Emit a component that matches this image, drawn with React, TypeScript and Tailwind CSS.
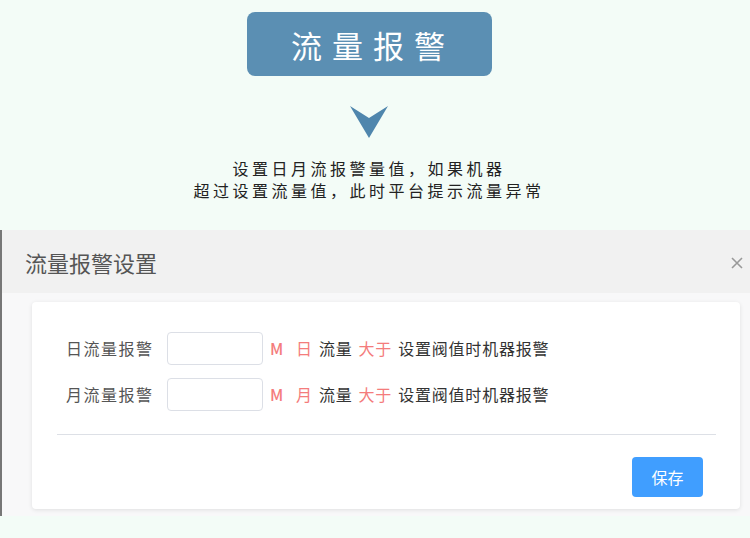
import React from "react";

const font = { fontFamily: '"Noto Sans CJK SC", "Noto Sans", sans-serif' };

function Row({ label, unit }: { label: string; unit: string }) {
  return (
    <div className="flex items-center h-[33px]">
      <div className="w-[101px] text-[16px] tracking-[1.5px] text-[#555] leading-none mb-[2px]">{label}</div>
      <div className="w-[96px] h-[33px] rounded-[4px] border border-[#dcdfe6] bg-white" />
      <div className="flex items-center gap-[6px] ml-[7px] text-[16px] tracking-[0.8px] leading-none mb-[2px]">
        <span className="text-[#f47c7c] font-medium">M</span>
        <span className="text-[#f47c7c] ml-[6px]">{unit}</span>
        <span className="text-[#333]">流量</span>
        <span className="text-[#f47c7c]">大于</span>
        <span className="text-[#333]">设置阀值时机器报警</span>
      </div>
    </div>
  );
}

export default function App() {
  return (
    <div className="w-[750px] h-[538px] bg-[#f3fcf7] overflow-hidden" style={font}>
      <div className="w-[738px] h-[230px] flex flex-col items-center">
        <div className="mt-[12px] w-[245px] h-[64px] rounded-[8px] bg-[#5b8fb3] flex items-center justify-center text-white text-[31px] tracking-[10px] pl-[8px] leading-none">
          流量报警
        </div>
        <svg className="mt-[29px]" width="38" height="33" viewBox="0 0 38 33">
          <path d="M0 1 L19 13 L38 1 L19 33 Z" fill="#4f86ad" />
        </svg>
        <div className="mt-[19px] text-[16px] leading-[22px] tracking-[3.5px] text-[#222] text-center">
          <div>设置日月流报警量值，如果机器</div>
          <div>超过设置流量值，此时平台提示流量异常</div>
        </div>
      </div>
      <div className="h-[286px] border-l-2 border-[#777] bg-[#f8f8f9] flex flex-col">
        <div className="h-[63px] bg-[#f1f1f1] flex items-center justify-between pl-[23px] pr-[6px]">
          <span className="text-[22px] text-[#555] leading-none">流量报警设置</span>
          <svg width="14" height="14" viewBox="0 0 14 14" className="mt-[2px]">
            <path d="M2 2 L12 12 M12 2 L2 12" stroke="#999" strokeWidth="1.6" />
          </svg>
        </div>
        <div className="pt-[9px] pl-[30px] pr-[10px]">
          <div className="h-[207px] bg-white rounded-[4px] shadow-[0_1px_4px_rgba(0,0,0,0.1)] flex flex-col">
            <div className="pt-[30px] pl-[34px] flex flex-col gap-[13px]">
              <Row label="日流量报警" unit="日" />
              <Row label="月流量报警" unit="月" />
            </div>
            <div className="mt-[23px] mx-[24px] ml-[25px] h-px bg-[#dde0e6]" />
            <div className="flex justify-end pr-[37px] mt-[22px]">
              <div className="w-[71px] h-[40px] rounded-[4px] bg-[#409eff] text-white text-[16px] flex items-center justify-center">
                保存
              </div>
            </div>
          </div>
        </div>
      </div>
    </div>
  );
}
